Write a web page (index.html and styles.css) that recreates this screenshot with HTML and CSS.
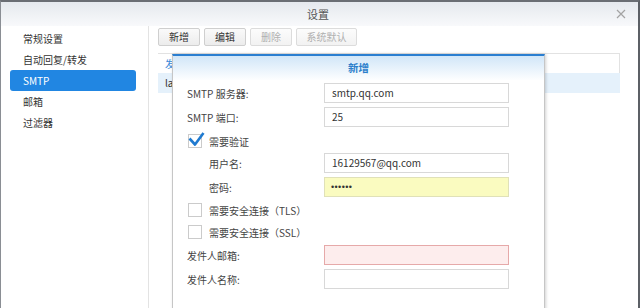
FILE: index.html
```html
<!DOCTYPE html>
<html lang="zh-CN">
<head>
<meta charset="utf-8">
<title>设置</title>
<link rel="stylesheet" href="styles.css">
</head>
<body>
<div class="window">
  <div class="titlebar">
    <span></span>
    <span class="title">设置</span>
    <svg class="close" width="10" height="10" viewBox="0 0 10 10"><path d="M1 1L9 9M9 1L1 9" stroke="#a3a3a3" stroke-width="1.2" fill="none"/></svg>
  </div>
  <div class="content">
    <ul class="sidebar">
      <li>常规设置</li>
      <li>自动回复/转发</li>
      <li class="active">SMTP</li>
      <li>邮箱</li>
      <li>过滤器</li>
    </ul>
    <div class="main">
      <div class="toolbar">
        <button class="btn">新增</button>
        <button class="btn">编辑</button>
        <button class="btn disabled">删除</button>
        <button class="btn wide disabled">系统默认</button>
      </div>
      <div class="table">
        <div class="thead"><span class="cell">发件人邮箱</span></div>
        <div class="trow"><span class="cell">lanxxx@qq.com</span></div>
      </div>
    </div>
  </div>
  <div class="modal">
    <div class="modal-head">新增</div>
    <div class="form">
      <div class="row first"><span class="label">SMTP 服务器:</span><div class="field">smtp.qq.com</div></div>
      <div class="row"><span class="label">SMTP 端口:</span><div class="field">25</div></div>
      <div class="row check g3"><span class="box"><svg class="tick" width="18" height="17" viewBox="0 0 18 17"><path d="M1.5 7.5L7 13.5L15.5 2" stroke="#1f7ad0" stroke-width="2.6" fill="none" stroke-linejoin="round"/></svg></span><span class="ctext">需要验证</span></div>
      <div class="row g1"><span class="label sub">用户名:</span><div class="field">16129567@qq.com</div></div>
      <div class="row"><span class="label sub">密码:</span><div class="field pass">••••••</div></div>
      <div class="row check g2"><span class="box"></span><span class="ctext">需要安全连接（TLS）</span></div>
      <div class="row check g0"><span class="box"></span><span class="ctext">需要安全连接（SSL）</span></div>
      <div class="row g2"><span class="label">发件人邮箱:</span><div class="field error"></div></div>
      <div class="row"><span class="label">发件人名称:</span><div class="field"></div></div>
    </div>
  </div>
</div>
</body>
</html>
```

FILE: styles.css
```css
* { box-sizing: border-box; }
html, body { margin: 0; padding: 0; }
body {
  width: 640px;
  height: 308px;
  overflow: hidden;
  background: #fff;
  font-family: "Noto Sans CJK SC", "Liberation Sans", sans-serif;
  font-size: 10px;
  color: #3a3a3a;
}
.window {
  position: relative;
  width: 640px;
  height: 308px;
  overflow: hidden;
  border-top: 2px solid #6a6e74;
  border-left: 1px solid #8a8e94;
  border-right: 2px solid #5c6066;
  display: flex;
  flex-direction: column;
}
.titlebar {
  height: 24px;
  flex: none;
  display: grid;
  grid-template-columns: 1fr auto 1fr;
  align-items: center;
  background: linear-gradient(#e5e9ee, #f8f9fb);
}
.title {
  font-size: 11px;
  color: #555;
  line-height: 14px;
  margin-left: -3px;
}
.close {
  justify-self: end;
  margin-right: 12px;
  margin-top: -1px;
}
.content {
  flex: 1;
  display: flex;
  min-height: 0;
}
.sidebar {
  list-style: none;
  margin: 0;
  padding: 2px 12px 0 9px;
  width: 148px;
  flex: none;
  border-right: 1px solid #e3e3e3;
}
.sidebar li {
  height: 21px;
  line-height: 21px;
  padding-left: 13px;
  color: #333;
  border-radius: 3px;
}
.sidebar li.active {
  background: #2186e2;
  color: #fff;
}
.main {
  flex: 1;
  padding: 2px 0 0 9px;
}
.toolbar {
  display: flex;
  gap: 4px;
}
.btn {
  width: 42px;
  height: 18px;
  padding: 0;
  border: 1px solid #cfcfcf;
  border-radius: 2px;
  background: linear-gradient(#fafafa, #ececec);
  font-family: inherit;
  font-size: 10px;
  color: #333;
  line-height: 16px;
}
.btn.wide { width: 61px; }
.btn.disabled { color: #b0b0b0; background: linear-gradient(#fcfcfc, #f2f2f2); border-color: #dcdcdc; }
.table {
  margin-top: 7px;
  width: 462px;
}
.thead {
  height: 20px;
  line-height: 19px;
  border-top: 1px solid #e2e2e2;
  border-right: 1px solid #e2e2e2;
  color: #3a8ad8;
}
.trow {
  height: 20px;
  line-height: 20px;
  background: #e5f1fb;
  color: #333;
}
.cell {
  display: block;
  width: 14px;
  margin-left: 7px;
  overflow: hidden;
  white-space: nowrap;
}
.modal {
  position: absolute;
  left: 171px;
  top: 52px;
  width: 373px;
  height: 260px;
  background: #fff;
  border: 1px solid #c6c6c6;
  border-top: 2px solid #2a7ed0;
  box-shadow: 1px 0 3px rgba(0, 0, 0, 0.18);
}
.modal-head {
  height: 24px;
  line-height: 24px;
  text-align: center;
  background: linear-gradient(#d1e6f8, #fdfeff);
  color: #2c7fcb;
  font-weight: 700;
  font-size: 10.5px;
}
.form {
  padding: 3px 0 0 14px;
}
.row {
  display: flex;
  align-items: center;
  height: 20px;
  margin-top: 4px;
}
.row.first { margin-top: 0; }
.row.check { height: 22px; }
.row.g0 { margin-top: 0; }
.row.g1 { margin-top: 1px; }
.row.g2 { margin-top: 2px; }
.row.g3 { margin-top: 3px; }
.label {
  width: 137px;
  flex: none;
  color: #444;
}
.label.sub { padding-left: 22px; }
.field {
  width: 185px;
  height: 20px;
  border: 1px solid #d8d8d8;
  padding-left: 7px;
  line-height: 18px;
  color: #333;
  background: #fff;
}
.field.pass {
  background: #fafbc0;
  border-color: #e0e1b8;
  font-family: "Liberation Sans", sans-serif;
  font-size: 9px;
  letter-spacing: 0.4px;
  padding-left: 6px;
}
.field.error {
  background: #fdeded;
  border-color: #e6a9a9;
}
.box {
  position: relative;
  width: 14px;
  height: 14px;
  margin-left: 1px;
  border: 1px solid #cbcbcb;
  background: #fff;
  flex: none;
}
.tick {
  position: absolute;
  left: -1px;
  top: -4px;
}
.ctext {
  margin-left: 7px;
  color: #444;
}
```
